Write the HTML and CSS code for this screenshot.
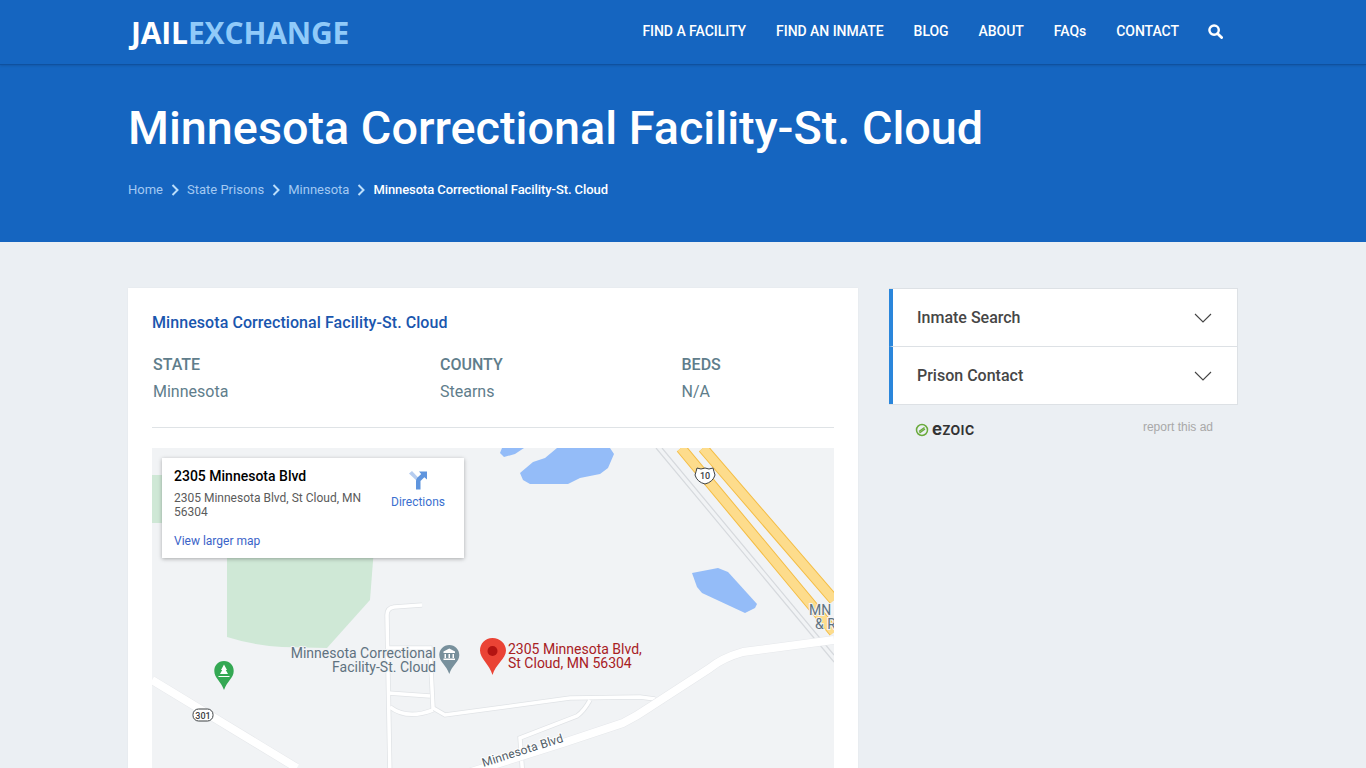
FILE: index.html
```html
<!DOCTYPE html>
<html lang="en">
<head>
<meta charset="utf-8">
<title>Minnesota Correctional Facility-St. Cloud</title>
<link rel="stylesheet" href="styles.css">
</head>
<body>
<header class="topbar">
  <div class="topbar-inner">
    <a class="logo"><span class="logo-a">JAIL</span><span class="logo-b">EXCHANGE</span></a>
    <nav class="nav">
      <a>FIND A FACILITY</a>
      <a>FIND AN INMATE</a>
      <a>BLOG</a>
      <a>ABOUT</a>
      <a>FAQs</a>
      <a>CONTACT</a>
      <svg class="search" viewBox="0 0 16 16"><circle cx="6.5" cy="6.5" r="5" class="search-ring"/><path d="M10.3 10.3l4.200 4.200" class="search-handle"/></svg>
    </nav>
  </div>
</header>
<section class="hero">
  <h1>Minnesota Correctional Facility-St. Cloud</h1>
  <div class="crumbs">
    <a>Home</a>
    <svg class="crumb-sep" viewBox="0 0 8 12"><path d="M1.5 1l5 5-5 5"/></svg>
    <a>State Prisons</a>
    <svg class="crumb-sep" viewBox="0 0 8 12"><path d="M1.5 1l5 5-5 5"/></svg>
    <a>Minnesota</a>
    <svg class="crumb-sep" viewBox="0 0 8 12"><path d="M1.5 1l5 5-5 5"/></svg>
    <span class="crumb-current">Minnesota Correctional Facility-St. Cloud</span>
  </div>
</section>
<main class="content">
  <article class="card">
    <h2 class="card-title">Minnesota Correctional Facility-St. Cloud</h2>
    <div class="facts">
      <div><div class="fact-label">STATE</div><div class="fact-value">Minnesota</div></div>
      <div><div class="fact-label">COUNTY</div><div class="fact-value">Stearns</div></div>
      <div><div class="fact-label">BEDS</div><div class="fact-value">N/A</div></div>
    </div>
    <hr class="rule">
    <div class="map">
      <svg class="map-svg" viewBox="0 0 682 450">
        <path class="park" d="M0 27L10 27 10 75 0 75Z"/>
        <path class="park" d="M75 100L222 100 218 152 175 200 130 199Q100 197 75 189Z"/>
        <path class="water" d="M350 0L372 0 363 6 352 9 348 5Z"/>
        <path class="water" d="M405 0L458 0 462 6 456 20 448 26 428 30 416 36 378 36 371 32 368 25 381 14 393 10Z"/>
        <path class="water" d="M540 125L566 120 576 124 605 156 603 160 593 165 550 145 545 139Z"/>
        <path class="rail" d="M504 0L682 214M510 0L682 207"/>
        <path class="hw-edge" d="M529 0L682 184M551 0L682 152"/>
        <path class="hw-fill" d="M529 0L682 184M551 0L682 152"/>
        <g class="minor">
          <path class="edge" d="M270 157L242 159Q235 160 235 167L238 330"/>
          <path class="edge" d="M236 200L278 200 281 260 293 267 418 250 488 249 503 251"/>
          <path class="edge" d="M236 245L278 248M238 259Q255 272 281 262"/>
          <path class="edge" d="M438 252Q432 263 425 268L368 290 371 330"/>
          <path class="core" d="M270 157L242 159Q235 160 235 167L238 330"/>
          <path class="core" d="M236 200L278 200 281 260 293 267 418 250 488 249 503 251"/>
          <path class="core" d="M236 245L278 248M238 259Q255 272 281 262"/>
          <path class="core" d="M438 252Q432 263 425 268L368 290 371 330"/>
        </g>
        <path class="road-edge" d="M0 232L145 320M682 192L591 204Q570 210 558 220L498 259Q485 268 471 275L411 295 300 330"/>
        <path class="road" d="M0 232L145 320M682 192L591 204Q570 210 558 220L498 259Q485 268 471 275L411 295 300 330"/>

        <rect class="shield" x="41" y="261" width="20" height="12" rx="5.5"/>
        <text class="shield-text" x="51" y="270.5">301</text>
        <path class="shield" d="M545 20Q549 22 553 20 557 22 561 20 562 24 563 27 561 34 553 36 545 34 543 27 544 24 545 20Z"/>
        <text class="shield-text" x="553" y="31">10</text>

        <path class="pin-green" d="M72 213C66 213 62.300 217.500 62.300 223 62.300 230 69 233 72 242 75 233 81.700 230 81.700 223 81.700 217.500 78 213 72 213Z"/>
        <path class="pin-icon" d="M72 216.500L75 222H73.800L76 226H68L70.200 222H69ZM66.500 228H77.500V229H66.500Z"/>
        <path class="pin-gray" d="M297.300 197C291.500 197 287.300 201.500 287.300 207 287.300 214 294.500 217 297.300 226 300 217 307.300 214 307.300 207 307.300 201.500 303 197 297.300 197Z"/>
        <path class="pin-icon" d="M291.500 203.500L297.300 200.500 303 203.500V205H291.500ZM292.500 206H294V210H292.500ZM296.500 206H298V210H296.500ZM300.500 206H302V210H300.500ZM291.500 210.500H303V212H291.500Z"/>

        <text class="label-poi" text-anchor="end"><tspan x="284" y="210">Minnesota Correctional</tspan><tspan x="284" y="224">Facility-St. Cloud</tspan></text>

        <path class="pin-red" d="M340.500 190C333 190 328 195.800 328 202.500 328 211 337.500 216 340.500 227 343.500 216 354 211 354 202.500 354 195.800 348 190 340.500 190Z"/>
        <circle class="pin-red-dot" cx="340.500" cy="203" r="5"/>
        <text class="label-addr"><tspan x="356" y="206">2305 Minnesota Blvd,</tspan><tspan x="356" y="220">St Cloud, MN 56304</tspan></text>

        <text class="label-road" transform="translate(331.500 319) rotate(-17.500)">Minnesota Blvd</text>
        <text class="label-poi"><tspan x="657" y="167">MN</tspan><tspan x="663" y="181">&amp; R</tspan></text>
      </svg>
      <div class="place-card">
        <div class="place-info">
          <div class="place-name">2305 Minnesota Blvd</div>
          <div class="place-addr">2305 Minnesota Blvd, St Cloud, MN 56304</div>
          <a class="place-link">View larger map</a>
        </div>
        <div class="place-dir">
          <svg class="dir-icon" viewBox="0 0 20 20"><path class="dir-light" d="M1 3.500L4 1 12 9.500 10 12Z"/><path class="dir-dark" d="M8 19.500V11Q8 9 9.500 7.500L13.200 4 11 1.500H19V9.500L16.300 7.300 12.500 11V19.500Z"/></svg>
          <a class="dir-text">Directions</a>
        </div>
      </div>
    </div>
  </article>
  <aside class="side">
    <div class="acc">
      <div class="acc-item"><span>Inmate Search</span><svg class="chev" viewBox="0 0 18 10"><path d="M1 1l8 8 8-8"/></svg></div>
      <div class="acc-item"><span>Prison Contact</span><svg class="chev" viewBox="0 0 18 10"><path d="M1 1l8 8 8-8"/></svg></div>
    </div>
    <div class="ad-row">
      <div class="ezoic">
        <svg class="ez-mark" viewBox="0 0 14 14"><circle cx="7" cy="7" r="5.500"/><path d="M4 8.500L9.500 4.500M4.500 10L10 6"/></svg>
        <span><span class="ez-e">e</span><span class="ez-rest">zoic</span></span>
      </div>
      <span class="report">report this ad</span>
    </div>
  </aside>
</main>
</body>
</html>
```
FILE: styles.css
```css
* { box-sizing: border-box; }
html, body { margin: 0; padding: 0; }
body {
  background: #ebeff3;
  font-family: Roboto, "Liberation Sans", sans-serif;
  height: 768px;
  overflow: hidden;
}
.topbar {
  background: #1565c0;
  height: 65px;
  border-bottom: 1px solid #0f519f;
  box-shadow: 0 1px 2px rgba(0,0,0,.12);
  position: relative;
}
.topbar-inner {
  width: 1110px;
  margin: 0 auto;
  height: 64px;
  display: flex;
  align-items: center;
  justify-content: space-between;
  padding-left: 3px;
}
.logo {
  font-family: "Open Sans", sans-serif;
  font-weight: 700;
  font-size: 30px;
  letter-spacing: -0.15px;
  line-height: 1;
  position: relative;
  top: 1px;
}
.logo-a { color: #fff; }
.logo-b { color: #90caf9; }
.nav {
  display: flex;
  align-items: center;
  gap: 30px;
  padding-right: 15px;
  margin-top: -2px;
}
.nav a {
  color: #fff;
  font-size: 14px;
  font-weight: 500;
  letter-spacing: -0.04px;
}
.search { width: 15px; height: 15px; margin-left: -1px; }
.search-ring { fill: none; stroke: #fff; stroke-width: 2.6; }
.search-handle { fill: none; stroke: #fff; stroke-width: 3; stroke-linecap: round; }
.hero {
  background: #1565c0;
  height: 177px;
  padding: 33px 128px 0;
}
.hero h1 {
  margin: 0;
  color: #fff;
  font-size: 46.75px;
  font-weight: 500;
  line-height: 60px;
}
.crumbs {
  margin-top: 22px;
  display: flex;
  align-items: center;
  font-size: 13px;
  line-height: 20px;
  color: #a3c9f2;
}
.crumb-sep {
  width: 8px;
  height: 12px;
  margin: 0 8px;
  fill: none;
  stroke: #bbdefb;
  stroke-width: 2;
}
.crumb-current { color: #fff; font-weight: 500; letter-spacing: -0.08px; }
.content {
  display: flex;
  align-items: flex-start;
  padding: 46px 128px 0;
  gap: 31px;
}
.card {
  width: 730px;
  flex: none;
  background: #fff;
  padding: 25px 24px 24px;
  box-shadow: 0 0 2px rgba(0,0,0,.04);
}
.card-title {
  margin: 0;
  font-size: 16px;
  font-weight: 500;
  line-height: 20px;
  letter-spacing: .07px;
  color: #1a56ae;
}
.facts {
  display: grid;
  grid-template-columns: 287px 241.5px 1fr;
  margin-top: 20px;
  padding-left: 1px;
}
.fact-label {
  font-size: 16px;
  font-weight: 500;
  line-height: 24px;
  color: #607d8b;
}
.fact-value {
  font-size: 16px;
  line-height: 24px;
  margin-top: 3px;
  color: #607d8b;
}
.rule {
  margin: 23px 0 20px;
  border: 0;
  border-top: 1px solid #dfe3e6;
}
.map {
  position: relative;
  height: 450px;
  background: #f1f3f5;
  overflow: hidden;
}
.map-svg { display: block; width: 682px; height: 450px; }
.park { fill: #cfe8d6; }
.water { fill: #94bcf8; }
.rail { fill: none; stroke: #d6d9dd; stroke-width: 1.2; }
.hw-edge { fill: none; stroke: #f4bd45; stroke-width: 11; }
.hw-fill { fill: none; stroke: #fddc8c; stroke-width: 9; }
.edge { fill: none; stroke: #e0e3e6; stroke-width: 5; }
.core { fill: none; stroke: #fff; stroke-width: 3.500; }
.road-edge { fill: none; stroke: #e6e8eb; stroke-width: 9; }
.road { fill: none; stroke: #fff; stroke-width: 8; }
.shield { fill: #fff; stroke: #3c4043; stroke-width: 1; }
.shield-text { font-size: 9px; fill: #3c4043; text-anchor: middle; font-weight: 500; }
.pin-green { fill: #34a853; }
.pin-gray { fill: #78909c; }
.pin-icon { fill: #fff; }
.pin-red { fill: #ea4335; }
.pin-red-dot { fill: #b31412; }
.label-poi {
  font-size: 14px;
  fill: #5f7280;
  stroke: #f1f3f5;
  stroke-width: 2;
  paint-order: stroke;
}
.label-addr {
  font-size: 14px;
  fill: #a8201f;
  stroke: #f1f3f5;
  stroke-width: 2;
  paint-order: stroke;
}
.label-road {
  font-size: 12px;
  fill: #4f5b66;
  stroke: #fff;
  stroke-width: 2;
  paint-order: stroke;
  letter-spacing: .15px;
}
.place-card {
  position: absolute;
  left: 10px;
  top: 10px;
  width: 302px;
  height: 100px;
  background: #fff;
  box-shadow: 0 1px 4px rgba(0,0,0,.3);
  display: flex;
  padding: 9px 12px;
}
.place-info { width: 200px; flex: none; }
.place-name {
  font-size: 14px;
  font-weight: 500;
  line-height: 18px;
  color: #000;
}
.place-addr {
  margin-top: 6px;
  font-size: 12px;
  line-height: 14px;
  color: #5b5b5b;
}
.place-link {
  display: block;
  margin-top: 14px;
  font-size: 12px;
  line-height: 16px;
  color: #3a63c8;
}
.place-dir {
  flex: 1;
  display: flex;
  flex-direction: column;
  align-items: center;
  padding-top: 3px;
  margin-left: 10px;
}
.dir-icon { width: 20px; height: 20px; }
.dir-light { fill: #b6cdf0; }
.dir-dark { fill: #5f95de; }
.dir-text {
  margin-top: 4px;
  font-size: 12px;
  line-height: 16px;
  color: #3a6fcf;
}
.side { width: 349px; flex: none; }
.acc {
  background: #fff;
  border: 1px solid #dde1e5;
  border-left: 0;
}
.acc-item {
  height: 57px;
  border-left: 4px solid #2a86db;
  display: flex;
  align-items: center;
  justify-content: space-between;
  padding: 0 25px 0 24px;
  font-size: 16px;
  font-weight: 500;
  color: #464646;
}
.acc-item + .acc-item { border-top: 1px solid #dde1e5; height: 58px; }
.chev { width: 18px; height: 10px; fill: none; stroke: #444; stroke-width: 1.100; }
.ad-row {
  display: flex;
  justify-content: space-between;
  align-items: center;
  padding: 0 25px 0 26px;
  margin-top: 14px;
}
.ezoic {
  display: flex;
  align-items: center;
  gap: 3px;
  font-family: Inter, sans-serif;
  font-weight: 700;
  line-height: 20px;
  color: #333;
}
.ez-e { font-size: 17px; }
.ez-rest { font-size: 12.5px; text-transform: uppercase; letter-spacing: .6px; }
.ez-mark { width: 14px; height: 14px; fill: none; stroke: #6aaa3c; stroke-width: 1.500; }
.report {
  font-family: "Liberation Sans", sans-serif;
  font-size: 12px;
  line-height: 16px;
  color: #a8a8a8;
  position: relative;
  top: -3px;
}
```
